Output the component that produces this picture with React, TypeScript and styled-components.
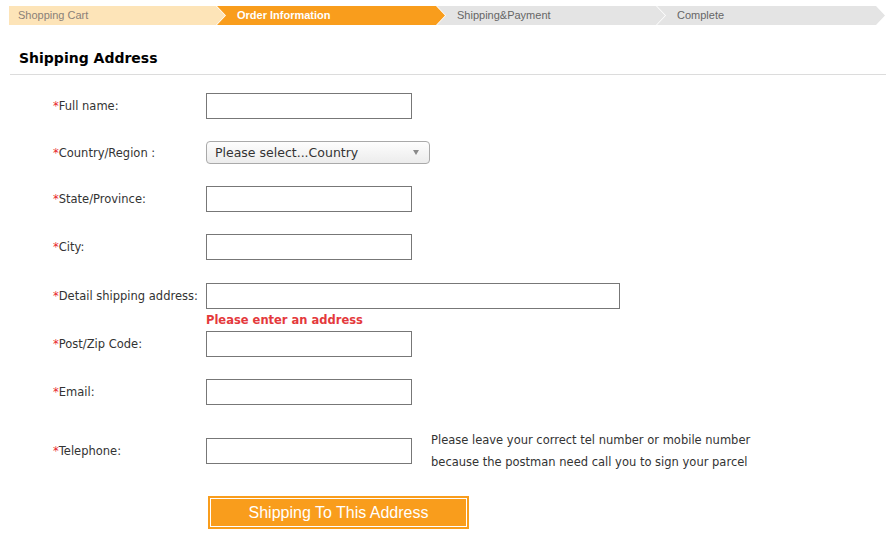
import styled, { createGlobalStyle } from "styled-components";

const GlobalStyle = createGlobalStyle`
  body {
    margin: 0;
    background: #fff;
    font-family: "DejaVu Sans", Verdana, sans-serif;
  }
`;

const Page = styled.div`
  width: 877px;
  padding: 6px 0 0 9px;
`;

const Steps = styled.div`
  display: flex;
  height: 19px;
`;

const Step = styled.div<{ $state: "done" | "current" | "todo"; $first?: boolean }>`
  display: flex;
  align-items: center;
  box-sizing: border-box;
  width: ${(p) => (p.$first ? "216px" : "228px")};
  margin-left: ${(p) => (p.$first ? "0" : "-8px")};
  padding: 0 0 2px ${(p) => (p.$first ? "9px" : "20px")};
  font-family: "Liberation Sans", Arial, sans-serif;
  font-size: 11px;
  font-weight: ${(p) => (p.$state === "current" ? "bold" : "normal")};
  color: ${(p) =>
    p.$state === "current" ? "#fff" : p.$state === "done" ? "#8a8178" : "#666"};
  background: ${(p) =>
    p.$state === "current" ? "#f99d1c" : p.$state === "done" ? "#fde4b8" : "#e4e4e4"};
  clip-path: ${(p) =>
    p.$first
      ? "polygon(0 0, calc(100% - 9px) 0, 100% 50%, calc(100% - 9px) 100%, 0 100%)"
      : "polygon(0 0, calc(100% - 9px) 0, 100% 50%, calc(100% - 9px) 100%, 0 100%, 9px 50%)"};
`;

const Heading = styled.h2`
  margin: 0 0 0 1px;
  padding: 23px 0 6px 9px;
  font-size: 14px;
  line-height: 20px;
  font-weight: bold;
  color: #000;
  border-bottom: 1px solid #dcdcdc;
`;

const Form = styled.div`
  display: flex;
  flex-direction: column;
  padding: 18px 0 0 44px;
`;

const Row = styled.div<{ $space?: number }>`
  display: grid;
  grid-template-columns: 153px max-content max-content;
  align-items: center;
  margin-top: ${(p) => (p.$space ?? 22)}px;
  &:first-child {
    margin-top: 0;
  }
`;

const Label = styled.label`
  font-size: 11.5px;
  color: #333;
  white-space: nowrap;
`;

const Star = styled.span`
  color: #e8262c;
`;

const TextInput = styled.input<{ $wide?: boolean }>`
  box-sizing: border-box;
  width: ${(p) => (p.$wide ? "414px" : "206px")};
  height: 26px;
  margin: 0;
  border: 1px solid #777;
  background: #fff;
  outline: none;
`;

const Select = styled.div`
  box-sizing: border-box;
  display: flex;
  align-items: center;
  justify-content: space-between;
  width: 224px;
  height: 23px;
  padding: 0 10px 0 8px;
  border: 1px solid #a9a9a9;
  border-radius: 4px;
  background: linear-gradient(#fdfdfd, #ececec);
  font-size: 12.5px;
  color: #333;
`;

const Caret = styled.span`
  width: 0;
  height: 0;
  border-left: 3px solid transparent;
  border-right: 3px solid transparent;
  border-top: 5px solid #8a8a8a;
`;

const ErrorText = styled.div`
  grid-column: 2;
  margin-top: 5px;
  font-size: 11.5px;
  line-height: 13px;
  font-weight: bold;
  color: #e4393c;
`;

const Hint = styled.div`
  margin-left: 19px;
  font-size: 11.5px;
  line-height: 22px;
  color: #333;
`;

const Actions = styled.div`
  margin: 23px 0 0 199px;
`;

const Submit = styled.button`
  box-sizing: border-box;
  width: 261px;
  height: 33px;
  border: 2px solid #f99d1c;
  box-shadow: inset 0 0 0 1px #fff;
  background: #f99d1c;
  color: #fff;
  font-family: "Liberation Sans", Arial, sans-serif;
  font-size: 16px;
  cursor: pointer;
`;

const steps: { text: string; state: "done" | "current" | "todo" }[] = [
  { text: "Shopping Cart", state: "done" },
  { text: "Order Information", state: "current" },
  { text: "Shipping&Payment", state: "todo" },
  { text: "Complete", state: "todo" },
];

function Field({ label }: { label: string }) {
  return (
    <Label>
      <Star>*</Star>
      {label}
    </Label>
  );
}

export default function App() {
  return (
    <Page>
      <GlobalStyle />
      <Steps>
        {steps.map((s, i) => (
          <Step key={s.text} $state={s.state} $first={i === 0}>
            {s.text}
          </Step>
        ))}
      </Steps>
      <Heading>Shipping Address</Heading>
      <Form>
        <Row>
          <Field label="Full name:" />
          <TextInput />
        </Row>
        <Row>
          <Field label="Country/Region :" />
          <Select>
            <span>Please select...Country</span>
            <Caret />
          </Select>
        </Row>
        <Row>
          <Field label="State/Province:" />
          <TextInput />
        </Row>
        <Row>
          <Field label="City:" />
          <TextInput />
        </Row>
        <Row $space={23}>
          <Field label="Detail shipping address:" />
          <TextInput $wide />
          <span />
          <ErrorText>Please enter an address</ErrorText>
        </Row>
        <Row $space={4}>
          <Field label="Post/Zip Code:" />
          <TextInput />
        </Row>
        <Row>
          <Field label="Email:" />
          <TextInput />
        </Row>
        <Row $space={24}>
          <Field label="Telephone:" />
          <TextInput />
          <Hint>
            Please leave your correct tel number or mobile number
            <br />
            because the postman need call you to sign your parcel
          </Hint>
        </Row>
      </Form>
      <Actions>
        <Submit>Shipping To This Address</Submit>
      </Actions>
    </Page>
  );
}
